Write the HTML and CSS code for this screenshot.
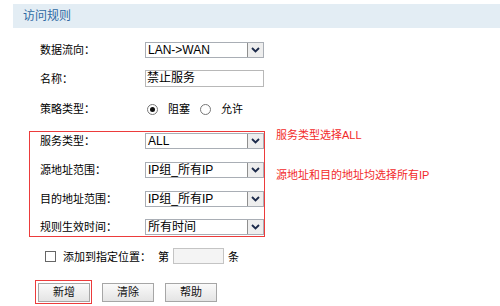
FILE: index.html
```html
<!DOCTYPE html>
<html lang="zh-CN">
<head>
<meta charset="utf-8">
<title>访问规则</title>
<link rel="stylesheet" href="styles.css">
</head>
<body>
<div class="header">访问规则</div>
<div class="form">
  <div class="row r1">
    <div class="label">数据流向：</div>
    <div class="sel"><span class="val">LAN-&gt;WAN</span><span class="arrow"><svg width="9" height="6" viewBox="0 0 9 6"><path d="M1 1 L4.5 4.5 L8 1" fill="none" stroke="#1c2a4a" stroke-width="1.8"/></svg></span></div>
  </div>
  <div class="row r2">
    <div class="label">名称：</div>
    <div class="txt">禁止服务</div>
  </div>
  <div class="row r3">
    <div class="label">策略类型：</div>
    <div class="radios">
      <span class="radio on"></span><span class="rtext">阻塞</span>
      <span class="radio"></span><span class="rtext">允许</span>
    </div>
  </div>
  <div class="section">
    <div class="redbox">
      <div class="brow b1">
        <div class="label">服务类型：</div>
        <div class="sel"><span class="val">ALL</span><span class="arrow"><svg width="9" height="6" viewBox="0 0 9 6"><path d="M1 1 L4.5 4.5 L8 1" fill="none" stroke="#1c2a4a" stroke-width="1.8"/></svg></span></div>
      </div>
      <div class="brow b2">
        <div class="label">源地址范围：</div>
        <div class="sel"><span class="val">IP组_所有IP</span><span class="arrow"><svg width="9" height="6" viewBox="0 0 9 6"><path d="M1 1 L4.5 4.5 L8 1" fill="none" stroke="#1c2a4a" stroke-width="1.8"/></svg></span></div>
      </div>
      <div class="brow b3">
        <div class="label">目的地址范围：</div>
        <div class="sel"><span class="val">IP组_所有IP</span><span class="arrow"><svg width="9" height="6" viewBox="0 0 9 6"><path d="M1 1 L4.5 4.5 L8 1" fill="none" stroke="#1c2a4a" stroke-width="1.8"/></svg></span></div>
      </div>
      <div class="brow b4">
        <div class="label">规则生效时间：</div>
        <div class="sel"><span class="val">所有时间</span><span class="arrow"><svg width="9" height="6" viewBox="0 0 9 6"><path d="M1 1 L4.5 4.5 L8 1" fill="none" stroke="#1c2a4a" stroke-width="1.8"/></svg></span></div>
      </div>
    </div>
    <div class="notes">
      <div class="note n1">服务类型选择ALL</div>
      <div class="note n2">源地址和目的地址均选择所有IP</div>
    </div>
  </div>
  <div class="posrow">
    <span class="check"></span>
    <span class="ptext">添加到指定位置：</span>
    <span class="di">第</span>
    <span class="posinput"></span>
    <span class="tiao">条</span>
  </div>
  <div class="buttons">
    <div class="hl"><div class="btn">新增</div></div>
    <div class="btn b-clear">清除</div>
    <div class="btn b-help">帮助</div>
  </div>
</div>
</body>
</html>
```
FILE: styles.css
```css
html, body {
  margin: 0;
  padding: 0;
  background: #ffffff;
}
body {
  width: 500px;
  height: 306px;
  overflow: hidden;
  font-family: "Liberation Sans", "Noto Sans CJK SC", sans-serif;
  font-size: 11px;
  color: #000;
}
.header {
  margin: 4px 0 0 13px;
  height: 24px;
  line-height: 24px;
  padding-left: 10px;
  background: #e3edf4;
  color: #2f6aa3;
  font-size: 12px;
}
.form {
  padding-top: 8px;
}
.row {
  display: flex;
  align-items: center;
  padding-left: 40px;
}
.r1 { height: 28px; }
.r2 { height: 29px; }
.r3 { height: 32px; }
.label {
  flex: none;
  width: 105px;
  line-height: 16px;
  white-space: nowrap;
}
.sel {
  flex: none;
  box-sizing: border-box;
  width: 119px;
  height: 16px;
  border: 1px solid #a9aeb5;
  background: #fff;
  display: flex;
  align-items: center;
  justify-content: space-between;
}
.val {
  padding-left: 2px;
  line-height: 14px;
  font-size: 12px;
  white-space: nowrap;
}
.arrow {
  box-sizing: border-box;
  width: 16px;
  height: 14px;
  border-left: 1px solid #8f8f8f;
  background: #eeeeee;
  display: flex;
  align-items: center;
  justify-content: center;
}
.txt {
  flex: none;
  box-sizing: border-box;
  width: 119px;
  height: 17px;
  border: 1px solid #b8b8b8;
  line-height: 15px;
  padding-left: 1px;
  font-size: 12px;
}
.radios {
  display: flex;
  align-items: center;
  padding-left: 2px;
}
.radio {
  flex: none;
  box-sizing: border-box;
  width: 11px;
  height: 11px;
  border: 1px solid #777;
  border-radius: 50%;
  background: #fff;
  position: relative;
}
.radio.on::after {
  content: "";
  position: absolute;
  left: 2px;
  top: 2px;
  width: 5px;
  height: 5px;
  border-radius: 50%;
  background: #111;
}
.rtext {
  margin-left: 10px;
  margin-right: 10px;
  line-height: 16px;
}
.section {
  margin-top: 6px;
  display: flex;
  align-items: flex-start;
}
.redbox {
  flex: none;
  box-sizing: border-box;
  margin-left: 29px;
  width: 236px;
  height: 106px;
  border: 1px solid #ec3b3b;
  padding-left: 10px;
}
.brow {
  display: flex;
  align-items: flex-start;
  padding-top: 1px;
}
.b1, .b2 { height: 28px; }
.b3 { height: 27px; }
.b4 { height: 18px; }
.notes {
  margin-left: 11px;
  margin-top: -3px;
  display: flex;
  flex-direction: column;
}
.note {
  color: #f22a2a;
  line-height: 14px;
  white-space: nowrap;
}
.n2 {
  margin-top: 26px;
}
.posrow {
  display: flex;
  align-items: center;
  height: 22px;
  margin-top: 8px;
  padding-left: 45px;
}
.check {
  flex: none;
  box-sizing: border-box;
  width: 11px;
  height: 11px;
  border: 1px solid #666;
  background: #fff;
}
.ptext {
  flex: none;
  margin-left: 7px;
  width: 95px;
  white-space: nowrap;
}
.di {
  flex: none;
  width: 15px;
}
.posinput {
  flex: none;
  box-sizing: border-box;
  width: 51px;
  height: 16px;
  border: 1px solid #c4c4c4;
  background: #f4f4f4;
}
.tiao {
  margin-left: 4px;
}
.buttons {
  display: flex;
  align-items: center;
  margin-top: 13px;
  padding-left: 35px;
}
.hl {
  flex: none;
  box-sizing: border-box;
  width: 57px;
  height: 24px;
  border: 1px solid #ec3b3b;
  padding: 2px 0 0 2px;
}
.btn {
  flex: none;
  box-sizing: border-box;
  width: 52px;
  height: 19px;
  border: 1px solid #a6a6a6;
  background: linear-gradient(#fafafa, #e4e4e4);
  text-align: center;
  line-height: 17px;
  color: #111;
}
.b-clear {
  margin-left: 10px;
}
.b-help {
  margin-left: 11px;
}
```
